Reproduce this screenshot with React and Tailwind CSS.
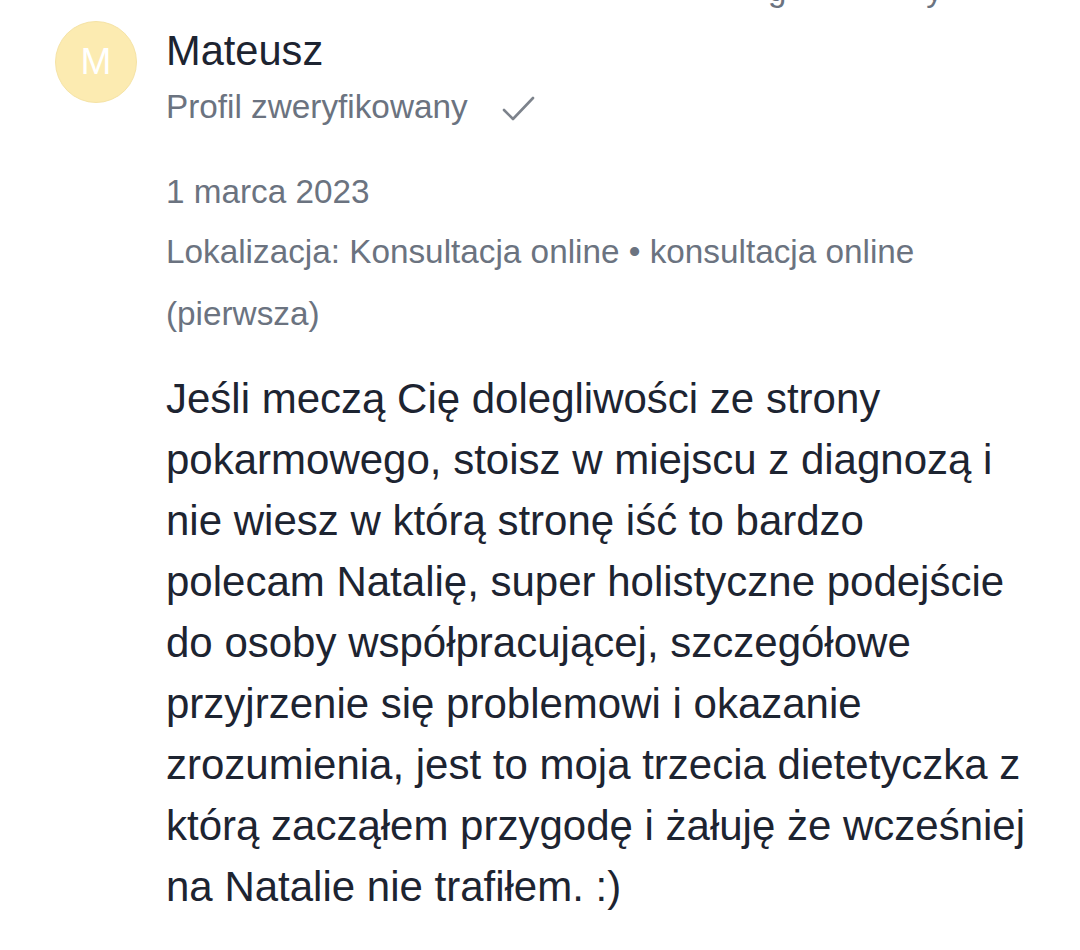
import React from 'react';

const ReviewPage = () => {
  return (
    <div className="min-h-screen w-[1080px] bg-white font-['Liberation_Sans',Arial,sans-serif] overflow-hidden">
      {/* koniec poprzedniej opinii, ucięty */}
      <div className="h-[9px] overflow-hidden text-[33px] leading-[33px] text-[#6b7380]">
        <div className="-mt-[27px] flex pl-[768px]">
          <span>g</span>
          <span className="ml-[140px]">y</span>
        </div>
      </div>

      <div className="flex pl-[55px] pt-[12px]">
        <div className="w-[82px] h-[82px] shrink-0 rounded-full bg-[#fcebb1] border border-[#f5e3a6] flex items-center justify-center text-white text-[37px]">
          M
        </div>

        <div className="ml-[29px] w-[862px] pt-[6px]">
          <div className="text-[41.6px] leading-[48px] text-[#1d2431]">Mateusz</div>
          <div className="mt-[12px] flex items-center text-[33.3px] leading-[40px] text-[#6b7380]">
            <span>Profil zweryfikowany</span>
            <svg className="ml-[34px] mt-[4px]" width="34" height="28" viewBox="0 0 34 28" fill="none">
              <polyline points="2,15 11,24 31,3" stroke="#7d838c" strokeWidth="2.6" strokeLinecap="round" strokeLinejoin="round" />
            </svg>
          </div>

          <div className="mt-[45px] text-[33.3px] leading-[40px] text-[#6b7380]">1 marca 2023</div>
          <div className="mt-[9px] text-[33.3px] leading-[62px] text-[#6b7380]">
            Lokalizacja: Konsultacja online • konsultacja online (pierwsza)
          </div>

          <p className="mt-[23px] text-[42px] leading-[61px] text-[#1d2431]">
            Jeśli meczą Cię dolegliwości ze strony pokarmowego, stoisz w miejscu z diagnozą i nie wiesz w którą stronę iść to bardzo polecam Natalię, super holistyczne podejście do osoby współpracującej, szczegółowe przyjrzenie się problemowi i okazanie zrozumienia, jest to moja trzecia dietetyczka z którą zacząłem przygodę i żałuję że wcześniej na Natalie nie trafiłem. :)
          </p>
        </div>
      </div>
    </div>
  );
};

export default ReviewPage;
